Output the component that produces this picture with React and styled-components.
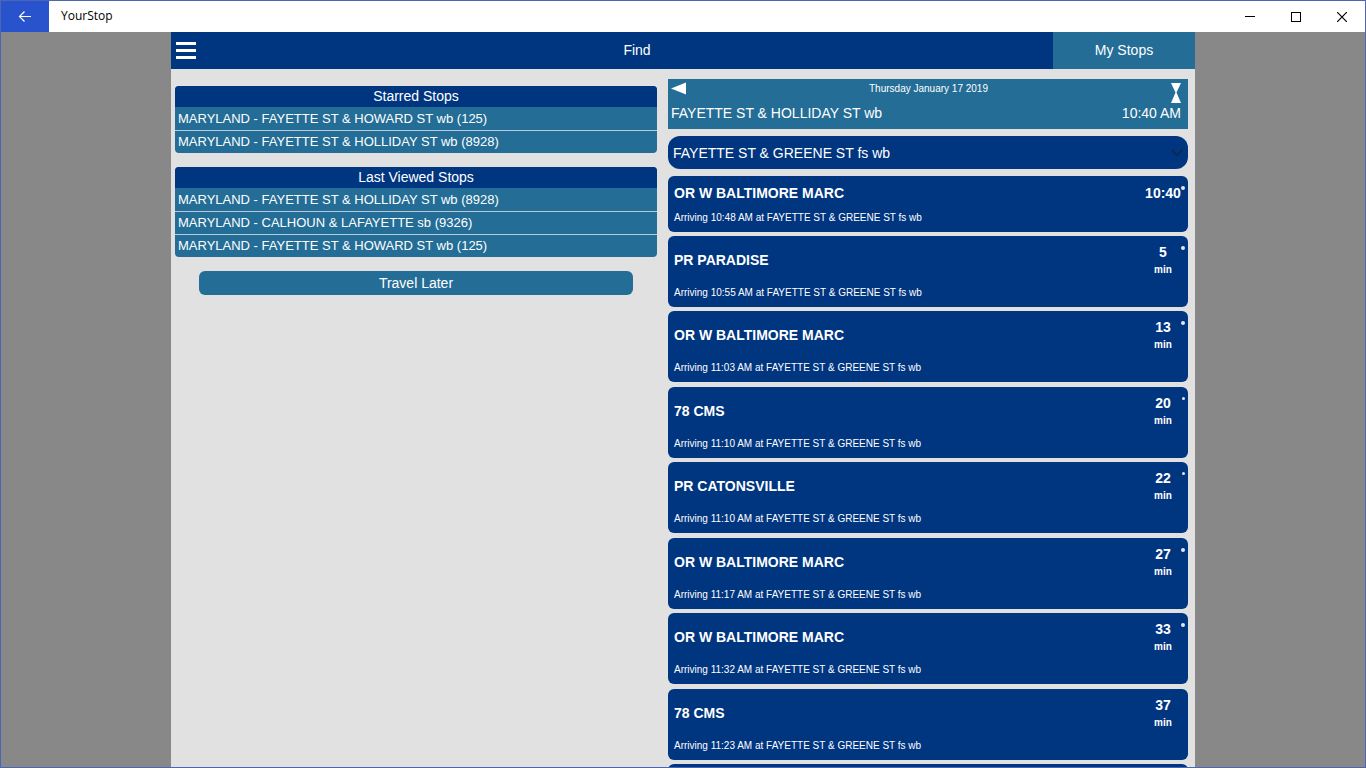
import React, { useState } from 'react';
import styled, { createGlobalStyle } from 'styled-components';

const GlobalStyle = createGlobalStyle`
  * {
    box-sizing: border-box;
  }

  body {
    margin: 0;
    font-family: 'Liberation Sans', Arial, sans-serif;
    color: #ffffff;
  }

  button, select {
    border: none;
    margin: 0;
    padding: 0;
    font-family: inherit;
    color: inherit;
    cursor: pointer;
  }
`;

const StyledWindow = styled.div`
  display: flex;
  flex-direction: column;
  height: 100vh;
  overflow: hidden;
  border: 1px solid #4c65b4;
  background: #888888;
`;

const TitleBar = styled.header`
  display: flex;
  flex: none;
  align-items: stretch;
  height: 31px;
  background: #ffffff;
  color: #000000;
`;

const BackButton = styled.button`
  display: flex;
  align-items: center;
  justify-content: center;
  width: 48px;
  background: #2853cd;
  color: #ffffff;
`;

const AppTitle = styled.span`
  flex: 1;
  padding-left: 12px;
  font-family: 'Open Sans', 'Noto Sans', sans-serif;
  font-size: 12px;
  line-height: 30px;
`;

const WindowButton = styled.button`
  display: flex;
  align-items: center;
  justify-content: center;
  width: 46px;
  background: transparent;
`;

const Page = styled.div`
  display: flex;
  flex: 1;
  flex-direction: column;
  width: 100%;
  min-height: 0;
  max-width: 1024px;
  margin: 0 auto;
  background: #e1e1e1;
`;

const Navbar = styled.nav`
  display: flex;
  flex: none;
  height: 37px;
  background: #003580;
`;

const MenuButton = styled.button`
  display: flex;
  flex-direction: column;
  align-items: center;
  justify-content: center;
  gap: 4px;
  width: 30px;
  background: transparent;

  span {
    width: 20px;
    height: 3px;
    background: #ffffff;
  }
`;

const NavLink = styled.a`
  flex: ${({ $side }) => ($side ? '0 0 142px' : '1')};
  background: ${({ $side }) => ($side ? '#236d96' : 'transparent')};
  padding-left: ${({ $side }) => ($side ? '0' : '20px')};
  font-size: 14px;
  line-height: 36px;
  text-align: center;
  text-decoration: none;
  color: #ffffff;
`;

const Columns = styled.main`
  display: grid;
  grid-template-columns: 482fr 520fr;
  grid-template-rows: minmax(0, 1fr);
  flex: 1;
  gap: 11px;
  min-height: 0;
  padding: 10px 7px 0 4px;
`;

const StopsColumn = styled.section`
  display: flex;
  flex-direction: column;
  gap: 14px;
  padding-top: 7px;
`;

const Panel = styled.section`
  overflow: hidden;
  border-radius: 4px;
  background: #236d96;
`;

const PanelTitle = styled.h2`
  margin: 0;
  background: #003580;
  font-size: 14px;
  font-weight: normal;
  line-height: 21px;
  text-align: center;
`;

const StopList = styled.ul`
  margin: 0;
  padding: 1px 0 0;
  list-style: none;

  li + li {
    border-top: 1px solid #b5cbd8;
  }
`;

const StopLink = styled.a`
  display: block;
  padding-left: 3px;
  font-size: 13px;
  line-height: 22px;
  text-decoration: none;
  color: #ffffff;
`;

const TravelButton = styled.button`
  align-self: center;
  width: 90%;
  border-radius: 6px;
  background: #236d96;
  font-size: 14px;
  line-height: 24px;
`;

const DeparturesColumn = styled.section`
  display: flex;
  flex-direction: column;
  min-width: 0;
`;

const StopHeader = styled.header`
  display: flex;
  flex: none;
  flex-direction: column;
  padding: 3px 7px 6px 3px;
  background: #236d96;
`;

const HeaderRow = styled.div`
  display: flex;
  align-items: flex-start;
  justify-content: space-between;
  font-size: ${({ $small }) => ($small ? '10px' : '14px')};
  line-height: ${({ $small }) => ($small ? '14px' : '20px')};
  height: ${({ $small }) => ($small ? '21px' : 'auto')};
`;

const IconButton = styled.button`
  display: flex;
  background: transparent;
`;

const SelectWrapper = styled.div`
  display: grid;
  flex: none;
  align-items: center;
  margin: 7px 0;

  select, svg {
    grid-area: 1 / 1;
  }

  svg {
    z-index: 1;
    justify-self: end;
    margin-right: 5px;
    pointer-events: none;
  }
`;

const StopSelect = styled.select`
  width: 100%;
  height: 33px;
  padding: 0 5px;
  border-radius: 12px;
  background: #003580;
  font-size: 14px;
  appearance: none;
`;

const DepartureList = styled.ul`
  flex: 1;
  min-height: 0;
  margin: 0;
  padding: 0;
  overflow-y: auto;
  scrollbar-width: none;
  list-style: none;
`;

const Departure = styled.li`
  position: relative;
  min-height: 56px;
  margin-bottom: 4px;
  padding: 6px 7px 6px 6px;
  border-radius: 6px;
  background: #003580;

  &:nth-child(odd):not(:first-child) {
    margin-bottom: 5px;
  }
`;

const DepartureTop = styled.div`
  display: flex;
  align-items: center;
  justify-content: space-between;
  margin-bottom: ${({ $clock }) => ($clock ? '6px' : '7px')};
`;

const RouteName = styled.h3`
  margin: 0;
  font-size: 14px;
  line-height: 22px;
`;

const Wait = styled.div`
  min-width: 36px;
  font-size: 14px;
  font-weight: bold;
  line-height: ${({ $clock }) => ($clock ? '22px' : '20px')};
  text-align: center;
`;

const Unit = styled.div`
  font-size: 10px;
  line-height: 16px;
`;

const Arrival = styled.p`
  margin: 0;
  font-size: 10px;
  line-height: 16px;
`;

const LiveDot = styled.span`
  position: absolute;
  top: 10px;
  right: 3px;
  width: ${({ $size }) => $size}px;
  height: ${({ $size }) => $size}px;
  border-radius: 50%;
  background: #dfe8f3;
`;

const starred = [
  'MARYLAND - FAYETTE ST & HOWARD ST wb (125)',
  'MARYLAND - FAYETTE ST & HOLLIDAY ST wb (8928)',
];

const lastViewed = [
  'MARYLAND - FAYETTE ST & HOLLIDAY ST wb (8928)',
  'MARYLAND - CALHOUN & LAFAYETTE sb (9326)',
  'MARYLAND - FAYETTE ST & HOWARD ST wb (125)',
];

const departures = [
  { route: 'OR W BALTIMORE MARC', clock: '10:40', arrives: '10:48 AM', dot: 4 },
  { route: 'PR PARADISE', wait: 5, arrives: '10:55 AM', dot: 4 },
  { route: 'OR W BALTIMORE MARC', wait: 13, arrives: '11:03 AM', dot: 4 },
  { route: '78 CMS', wait: 20, arrives: '11:10 AM', dot: 3 },
  { route: 'PR CATONSVILLE', wait: 22, arrives: '11:10 AM', dot: 3 },
  { route: 'OR W BALTIMORE MARC', wait: 27, arrives: '11:17 AM', dot: 4 },
  { route: 'OR W BALTIMORE MARC', wait: 33, arrives: '11:32 AM', dot: 4 },
  { route: '78 CMS', wait: 37, arrives: '11:23 AM' },
];

const StopsPanel = ({ title, stops }) => (
  <Panel>
    <PanelTitle>{title}</PanelTitle>
    <StopList>
      {stops.map((stop) => (
        <li key={stop}>
          <StopLink href="#stop">{stop}</StopLink>
        </li>
      ))}
    </StopList>
  </Panel>
);

const DepartureCard = ({ route, clock, wait, arrives, dot, destination }) => (
  <Departure>
    <DepartureTop $clock={clock}>
      <RouteName>{route}</RouteName>
      <Wait $clock={clock}>
        {clock || wait}
        {!clock && <Unit>min</Unit>}
      </Wait>
    </DepartureTop>
    <Arrival>
      Arriving {arrives} at {destination}
    </Arrival>
    {dot && <LiveDot $size={dot} />}
  </Departure>
);

const App = () => {
  const [destination, setDestination] = useState('FAYETTE ST & GREENE ST fs wb');

  return (
    <StyledWindow>
      <GlobalStyle />
      <TitleBar>
        <BackButton aria-label="Back">
          <svg width="14" height="12" viewBox="0 0 14 12" fill="none" stroke="currentColor" strokeWidth="1.2">
            <path d="M1.5 5.5H13M6.5 0.5L1.5 5.5L6.5 10.5" />
          </svg>
        </BackButton>
        <AppTitle>YourStop</AppTitle>
        <WindowButton aria-label="Minimize">
          <svg width="10" height="10" viewBox="0 0 10 10" stroke="#000000">
            <path d="M0 4.5H10" />
          </svg>
        </WindowButton>
        <WindowButton aria-label="Maximize">
          <svg width="10" height="10" viewBox="0 0 10 10" fill="none" stroke="#000000">
            <rect x="0.5" y="0.5" width="9" height="9" />
          </svg>
        </WindowButton>
        <WindowButton aria-label="Close">
          <svg width="10" height="10" viewBox="0 0 10 10" stroke="#000000" strokeWidth="1.2">
            <path d="M0 0L10 10M10 0L0 10" />
          </svg>
        </WindowButton>
      </TitleBar>
      <Page>
        <Navbar>
          <MenuButton aria-label="Menu">
            <span />
            <span />
            <span />
          </MenuButton>
          <NavLink href="#find">Find</NavLink>
          <NavLink href="#mystops" $side>
            My Stops
          </NavLink>
        </Navbar>
        <Columns>
          <StopsColumn>
            <StopsPanel title="Starred Stops" stops={starred} />
            <StopsPanel title="Last Viewed Stops" stops={lastViewed} />
            <TravelButton>Travel Later</TravelButton>
          </StopsColumn>
          <DeparturesColumn>
            <StopHeader>
              <HeaderRow $small>
                <IconButton aria-label="Previous">
                  <svg width="15" height="13" viewBox="0 0 15 13" fill="#ffffff">
                    <path d="M0 6.5L15 0.5V12.5Z" />
                  </svg>
                </IconButton>
                <span>Thursday January 17 2019</span>
                <IconButton aria-label="Refresh">
                  <svg width="10" height="21" viewBox="0 0 10 21" fill="#ffffff">
                    <path d="M0 1H10L5.5 10.5L10 21H0L4.5 10.5Z" />
                  </svg>
                </IconButton>
              </HeaderRow>
              <HeaderRow>
                <span>FAYETTE ST & HOLLIDAY ST wb</span>
                <span>10:40 AM</span>
              </HeaderRow>
            </StopHeader>
            <SelectWrapper>
              <StopSelect
                aria-label="Destination stop"
                value={destination}
                onChange={(e) => setDestination(e.target.value)}
              >
                <option>FAYETTE ST & GREENE ST fs wb</option>
                <option>FAYETTE ST & HOWARD ST wb</option>
              </StopSelect>
              <svg width="12" height="8" viewBox="0 0 12 8" fill="none" stroke="#16233f" strokeWidth="1.2">
                <path d="M1 1L6 6.5L11 1" />
              </svg>
            </SelectWrapper>
            <DepartureList>
              {departures.map((departure, index) => (
                <DepartureCard key={index} destination={destination} {...departure} />
              ))}
              {/* blank card until the next departure is loaded */}
              <Departure aria-hidden="true" />
            </DepartureList>
          </DeparturesColumn>
        </Columns>
      </Page>
    </StyledWindow>
  );
};

export default App;
